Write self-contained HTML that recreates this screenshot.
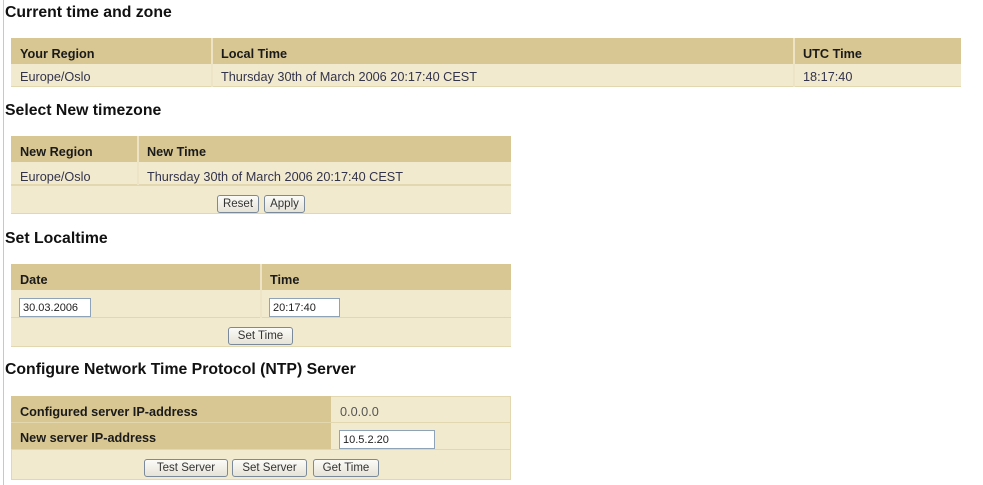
<!DOCTYPE html>
<html><head><style>
body{margin:0;width:983px;height:485px;background:#fff;position:relative;overflow:hidden;font-family:"Liberation Sans",Arial,sans-serif;}
.vl{position:absolute;left:3px;top:0;width:1px;height:485px;background:#c8c8c8}
.t{position:absolute;left:5px;font-weight:bold;font-size:15.8px;color:#111}
.b{position:absolute;box-sizing:border-box}
.h{background:#d8c792;font-weight:bold;font-size:12.7px;color:#1a1a1a}
.d{background:#f1eacf;font-size:12.7px;color:#33334a}
.cell{position:absolute;box-sizing:border-box;padding-left:9px;display:flex;align-items:center}
.sep{position:absolute;width:2px;background:#ede4c6}
.btn{position:absolute;box-sizing:border-box;border:1px solid #7a8a9a;border-radius:3px;background:linear-gradient(#fbfbf8,#e6e3d6);font-size:11.5px;color:#333;display:flex;align-items:center;justify-content:center;font-family:"Liberation Sans",Arial,sans-serif}
.inp{position:absolute;box-sizing:border-box;border:1px solid #8fa3b8;background:#fff;font-size:11px;color:#222;padding-left:3px;display:flex;align-items:center}
</style></head><body>
<div class="vl"></div>

<div class="t" style="top:4px">Current time and zone</div>
<div class="b h" style="left:11px;top:38px;width:950px;height:26px;"></div>
<div class="b d" style="left:11px;top:64px;width:950px;height:23px;border-bottom:1px solid #e2d7ae"></div>
<div class="cell h" style="left:11px;top:38px;width:200px;height:26px;background:none;padding-top:6px">Your Region</div>
<div class="cell h" style="left:212px;top:38px;width:580px;height:26px;background:none;padding-top:6px">Local Time</div>
<div class="cell h" style="left:794px;top:38px;width:160px;height:26px;background:none;padding-top:6px">UTC Time</div>
<div class="cell d" style="left:11px;top:64px;width:200px;height:23px;background:none;padding-top:3px">Europe/Oslo</div>
<div class="cell d" style="left:212px;top:64px;width:580px;height:23px;background:none;padding-top:3px">Thursday 30th of March 2006 20:17:40 CEST</div>
<div class="cell d" style="left:794px;top:64px;width:160px;height:23px;background:none;padding-top:3px">18:17:40</div>
<div class="sep" style="left:211px;top:38px;height:49px"></div>
<div class="sep" style="left:793px;top:38px;height:49px"></div>

<div class="t" style="top:102px">Select New timezone</div>
<div class="b h" style="left:11px;top:136px;width:500px;height:26px"></div>
<div class="b d" style="left:11px;top:162px;width:500px;height:24px;border-bottom:2px solid #e2d7ae"></div>
<div class="b d" style="left:11px;top:186px;width:500px;height:28px;border-bottom:1px solid #e2d7ae"></div>
<div class="cell h" style="left:11px;top:136px;width:126px;height:26px;background:none;padding-top:6px">New Region</div>
<div class="cell h" style="left:138px;top:136px;width:360px;height:26px;background:none;padding-top:6px">New Time</div>
<div class="cell d" style="left:11px;top:162px;width:126px;height:24px;background:none;padding-top:5px">Europe/Oslo</div>
<div class="cell d" style="left:138px;top:162px;width:360px;height:24px;background:none;padding-top:5px">Thursday 30th of March 2006 20:17:40 CEST</div>
<div class="sep" style="left:137px;top:136px;height:49px"></div>
<div class="btn" style="left:217px;top:195px;width:42px;height:18px">Reset</div>
<div class="btn" style="left:264px;top:195px;width:41px;height:18px">Apply</div>

<div class="t" style="top:230px">Set Localtime</div>
<div class="b h" style="left:11px;top:264px;width:500px;height:26px"></div>
<div class="b d" style="left:11px;top:290px;width:500px;height:28px;border-bottom:1px solid #e2d7ae"></div>
<div class="b d" style="left:11px;top:318px;width:500px;height:29px;border-bottom:1px solid #e2d7ae"></div>
<div class="cell h" style="left:11px;top:264px;width:249px;height:26px;background:none;padding-top:6px">Date</div>
<div class="cell h" style="left:261px;top:264px;width:240px;height:26px;background:none;padding-top:6px">Time</div>
<div class="sep" style="left:260px;top:264px;height:54px"></div>
<div class="inp" style="left:19px;top:298px;width:72px;height:19px">30.03.2006</div>
<div class="inp" style="left:269px;top:298px;width:71px;height:19px">20:17:40</div>
<div class="btn" style="left:228px;top:327px;width:65px;height:18px">Set Time</div>

<div class="t" style="top:361px">Configure Network Time Protocol (NTP) Server</div>
<div class="b d" style="left:11px;top:396px;width:500px;height:84px;border:1px solid #e2d7ae"></div>
<div class="cell h" style="left:11px;top:396px;width:320px;height:26px;padding-top:6px">Configured server IP-address</div>
<div class="cell h" style="left:11px;top:423px;width:320px;height:26px;padding-top:4px">New server IP-address</div>
<div class="b" style="left:11px;top:422px;width:500px;height:1px;background:#e2d7ae"></div>
<div class="b" style="left:11px;top:449px;width:500px;height:1px;background:#e2d7ae"></div>
<div class="cell d" style="left:331px;top:396px;width:170px;height:26px;background:none;padding-top:6px;color:#555">0.0.0.0</div>
<div class="inp" style="left:339px;top:430px;width:96px;height:19px">10.5.2.20</div>
<div class="btn" style="left:144px;top:459px;width:84px;height:18px">Test Server</div>
<div class="btn" style="left:232px;top:459px;width:75px;height:18px">Set Server</div>
<div class="btn" style="left:313px;top:459px;width:66px;height:18px">Get Time</div>
</body></html>
